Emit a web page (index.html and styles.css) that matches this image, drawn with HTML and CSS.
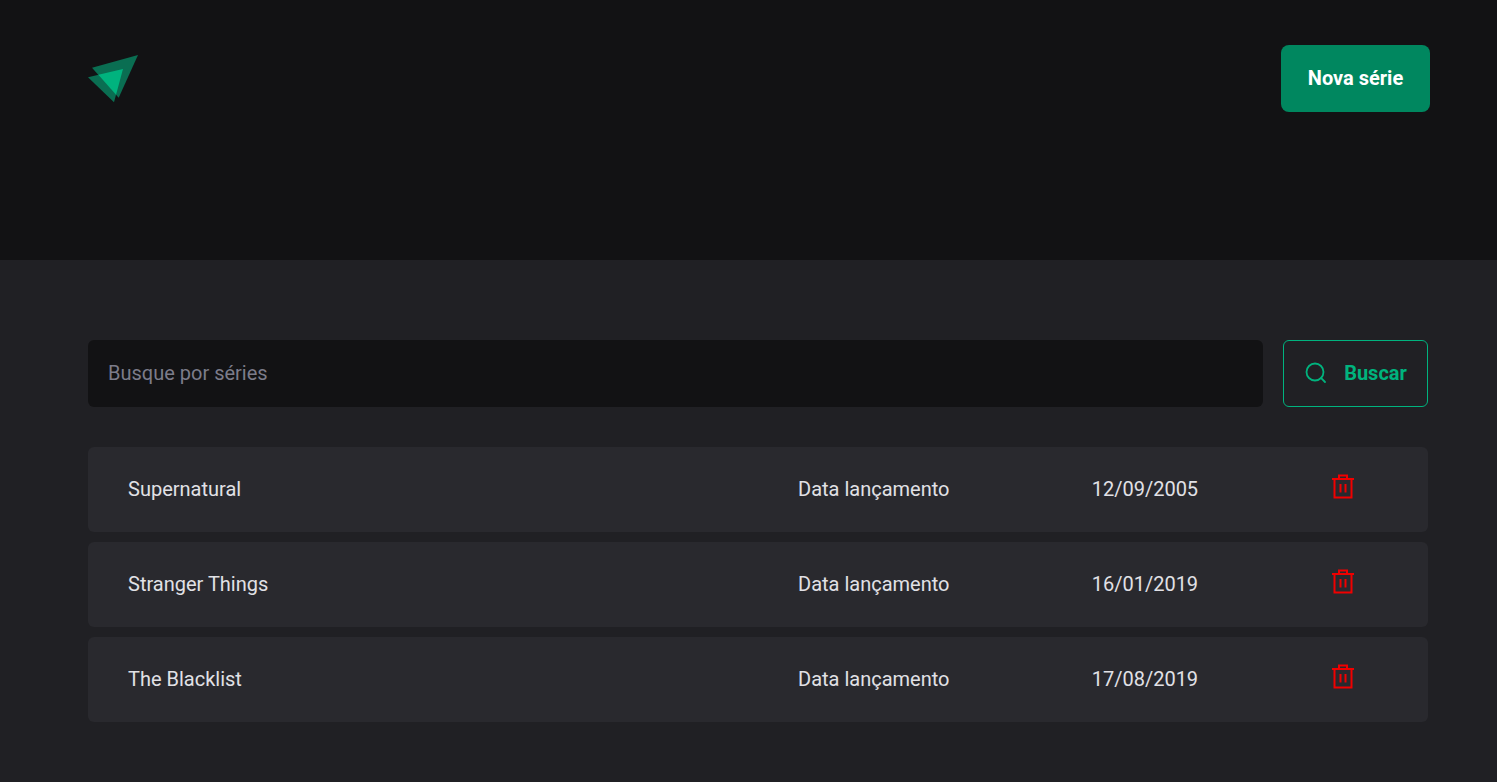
FILE: index.html
```html
<!DOCTYPE html>
<html lang="pt-BR">
<head>
<meta charset="utf-8">
<title>Séries</title>
<link rel="stylesheet" href="styles.css">
</head>
<body>
<header class="header">
  <svg class="logo" width="50" height="48" viewBox="0 0 50 48" aria-label="Logo">
    <path class="tri-back" d="M50 0 4 12.700 30.700 42.700Z"/>
    <path class="tri-back" d="M0 22.300 26 47.300 35 14Z"/>
    <path class="tri-front" d="M10.360 19.850 35 14 28.050 39.700Z"/>
  </svg>
  <button class="new-btn">Nova série</button>
</header>
<main class="main">
  <form class="search">
    <input class="search-input" type="text" placeholder="Busque por séries">
    <button class="search-btn" type="button">
      <svg width="24" height="24" viewBox="0 0 24 24" fill="none" stroke="currentColor" stroke-width="1.800" stroke-linecap="round"><circle cx="11" cy="11" r="8.500"/><path d="M17.200 17.200 21 21"/></svg>
      <span>Buscar</span>
    </button>
  </form>
  <ul class="list">
    <li class="row">
      <span>Supernatural</span><span>Data lançamento</span><span>12/09/2005</span>
      <svg class="trash" width="24" height="26" viewBox="0 0 24 26" fill="none" stroke="currentColor" stroke-width="2"><path d="M1 6h22M8 6V2.500h8V6M3.500 6V24.500h17V6M9.500 11v8.500M14.500 11v8.500"/></svg>
    </li>
    <li class="row">
      <span>Stranger Things</span><span>Data lançamento</span><span>16/01/2019</span>
      <svg class="trash" width="24" height="26" viewBox="0 0 24 26" fill="none" stroke="currentColor" stroke-width="2"><path d="M1 6h22M8 6V2.500h8V6M3.500 6V24.500h17V6M9.500 11v8.500M14.500 11v8.500"/></svg>
    </li>
    <li class="row">
      <span>The Blacklist</span><span>Data lançamento</span><span>17/08/2019</span>
      <svg class="trash" width="24" height="26" viewBox="0 0 24 26" fill="none" stroke="currentColor" stroke-width="2"><path d="M1 6h22M8 6V2.500h8V6M3.500 6V24.500h17V6M9.500 11v8.500M14.500 11v8.500"/></svg>
    </li>
  </ul>
</main>
</body>
</html>
```
FILE: styles.css
```css
* { box-sizing: border-box; margin: 0; padding: 0; }
html, body { height: 100%; }
body { background: #202024; color: #e1e1e6; font-family: Roboto, "Liberation Sans", sans-serif; font-size: 20px; overflow: hidden; }
.header { height: 260px; background: #121214; padding: 45px 67px 0 88px; display: flex; justify-content: space-between; align-items: flex-start; }
.logo { margin-top: 10px; }
.tri-back { fill: #0a6e52; }
.tri-front { fill: #00b37e; }
.new-btn { width: 149px; height: 67px; padding-bottom: 2px; background: #00875f; color: #fff; border: 0; border-radius: 8px; font: 700 20px Roboto, sans-serif; }
.main { padding: 80px 69px 0 88px; }
.search { display: flex; gap: 20px; }
.search-input { flex: 1; height: 67px; background: #121214; border: 0; border-radius: 6px; padding: 0 20px 2px; color: #e1e1e6; font: 400 20px Roboto, sans-serif; }
.search-input::placeholder { color: #7c7c8a; opacity: 1; }
.search-btn { width: 145px; height: 67px; padding-bottom: 2px; display: flex; align-items: center; justify-content: center; gap: 16px; background: transparent; border: 1px solid #00b37e; border-radius: 6px; color: #00b37e; font: 700 20px Roboto, sans-serif; }
.list { list-style: none; margin-top: 40px; display: flex; flex-direction: column; gap: 10px; }
.row { height: 85px; background: #29292e; border-radius: 6px; padding: 0 40px 2px; display: grid; grid-template-columns: 670px 293.7px 239.3px 24px; align-items: center; }
.trash { color: #f00000; margin-top: -5px; }
```
